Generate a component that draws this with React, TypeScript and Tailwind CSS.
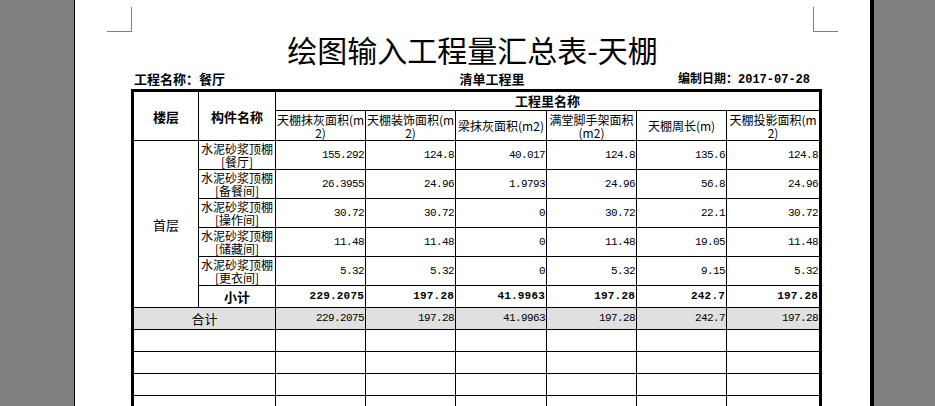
import React from "react";

const CJK = "font-['Noto_Sans_CJK_SC',sans-serif]";
const MONO = "font-['Liberation_Mono',monospace]";
const C = "border-r border-b border-black p-0";
const L = "border-b border-black p-0";

const rows: string[][] = [
  ["[餐厅]", "155.292", "124.8", "40.017", "124.8", "135.6", "124.8"],
  ["[备餐间]", "26.3955", "24.96", "1.9793", "24.96", "56.8", "24.96"],
  ["[操作间]", "30.72", "30.72", "0", "30.72", "22.1", "30.72"],
  ["[储藏间]", "11.48", "11.48", "0", "11.48", "19.05", "11.48"],
  ["[更衣间]", "5.32", "5.32", "0", "5.32", "9.15", "5.32"],
];
const subtotal = ["229.2075", "197.28", "41.9963", "197.28", "242.7", "197.28"];

function Num({ v, bold, last }: { v: string; bold?: boolean; last?: boolean }) {
  return (
    <td
      className={`${last ? L : C} text-right pr-[1px] ${MONO} ${
        bold ? "font-bold text-[11px] tracking-[0.2px]" : "text-[11px] tracking-[-0.6px]"
      }`}
    >
      {v}
    </td>
  );
}

export default function App() {
  return (
    <div className="w-[935px] h-[406px] overflow-hidden bg-[#808080]">
      <div className="ml-[74px] w-[800px] h-[406px] bg-white border-l border-r-4 border-black text-black">
        {/* corner marks */}
        <div className="flex justify-between px-[32px] pt-[7px]">
          <div className="w-[25px] h-[25px] border-r border-b border-[#808080]" />
          <div className="w-[25px] h-[25px] border-l border-b border-[#808080]" />
        </div>
        {/* title */}
        <div className={`mt-[2px] text-center text-[30px] leading-[30px] ${CJK}`}>
          绘图输入工程量汇总表-天棚
        </div>
        {/* info row */}
        <div className={`ml-[56px] w-[691px] mt-[7px] h-[16px] flex items-center text-[13px] leading-[16px] font-bold ${CJK}`}>
          <div className="w-[243px] pl-[3px]">工程名称：餐厅</div>
          <div className="w-[236px] text-center">清单工程里</div>
          <div className="flex-1 text-right pr-[12px]">
            <span className="text-[12px]">编制日期：</span>
            <span className={`${MONO} text-[12px]`}>2017-07-28</span>
          </div>
        </div>
        {/* table */}
        <table
          className={`mt-[2px] ml-[56px] w-[691px] table-fixed border-separate border-spacing-0 border-l-[3px] border-t-[3px] border-r-[3px] border-black ${CJK} text-[12px] leading-[13px]`}
        >
          <colgroup>
            <col className="w-[65px]" />
            <col className="w-[77px]" />
            <col className="w-[90px]" />
            <col className="w-[90px]" />
            <col className="w-[91px]" />
            <col className="w-[90px]" />
            <col className="w-[90px]" />
            <col className="w-[92px]" />
          </colgroup>
          <tbody>
            <tr className="h-[19px]">
              <td rowSpan={2} className={`${C} text-center font-bold text-[13px]`}>
                楼层
              </td>
              <td rowSpan={2} className={`${C} text-center font-bold text-[13px]`}>
                构件名称
              </td>
              <td colSpan={6} className={`${L} text-center font-bold text-[13px] leading-[18px]`}>
                工程里名称
              </td>
            </tr>
            <tr className="h-[30px]">
              <td className={`${C} text-center`}>
                天棚抹灰面积(m
                <br />
                2)
              </td>
              <td className={`${C} text-center`}>
                天棚装饰面积(m
                <br />
                2)
              </td>
              <td className={`${C} text-center`}>梁抹灰面积(m2)</td>
              <td className={`${C} text-center`}>
                满堂脚手架面积
                <br />
                (m2)
              </td>
              <td className={`${C} text-center`}>天棚周长(m)</td>
              <td className={`${L} text-center`}>
                天棚投影面积(m
                <br />
                2)
              </td>
            </tr>
            {rows.map((r, i) => (
              <tr key={i} className="h-[29px]">
                {i === 0 && (
                  <td rowSpan={6} className={`${C} text-center text-[13px]`}>
                    首层
                  </td>
                )}
                <td className={`${C} text-center`}>
                  水泥砂浆顶棚
                  <br />
                  {r[0]}
                </td>
                {r.slice(1).map((v, j) => (
                  <Num key={j} v={v} last={j === 5} />
                ))}
              </tr>
            ))}
            <tr className="h-[22px]">
              <td className={`${C} text-center font-bold text-[13px]`}>小计</td>
              {subtotal.map((v, j) => (
                <Num key={j} v={v} bold last={j === 5} />
              ))}
            </tr>
            <tr className="h-[22px] bg-[#e0e0e0]">
              <td colSpan={2} className={`${C} text-center text-[13px]`}>
                合计
              </td>
              {subtotal.map((v, j) => (
                <Num key={j} v={v} last={j === 5} />
              ))}
            </tr>
            {[0, 1, 2, 3].map((k) => (
              <tr key={k} className="h-[22px]">
                <td colSpan={2} className={C} />
                <td className={C} />
                <td className={C} />
                <td className={C} />
                <td className={C} />
                <td className={C} />
                <td className={L} />
              </tr>
            ))}
          </tbody>
        </table>
      </div>
    </div>
  );
}
